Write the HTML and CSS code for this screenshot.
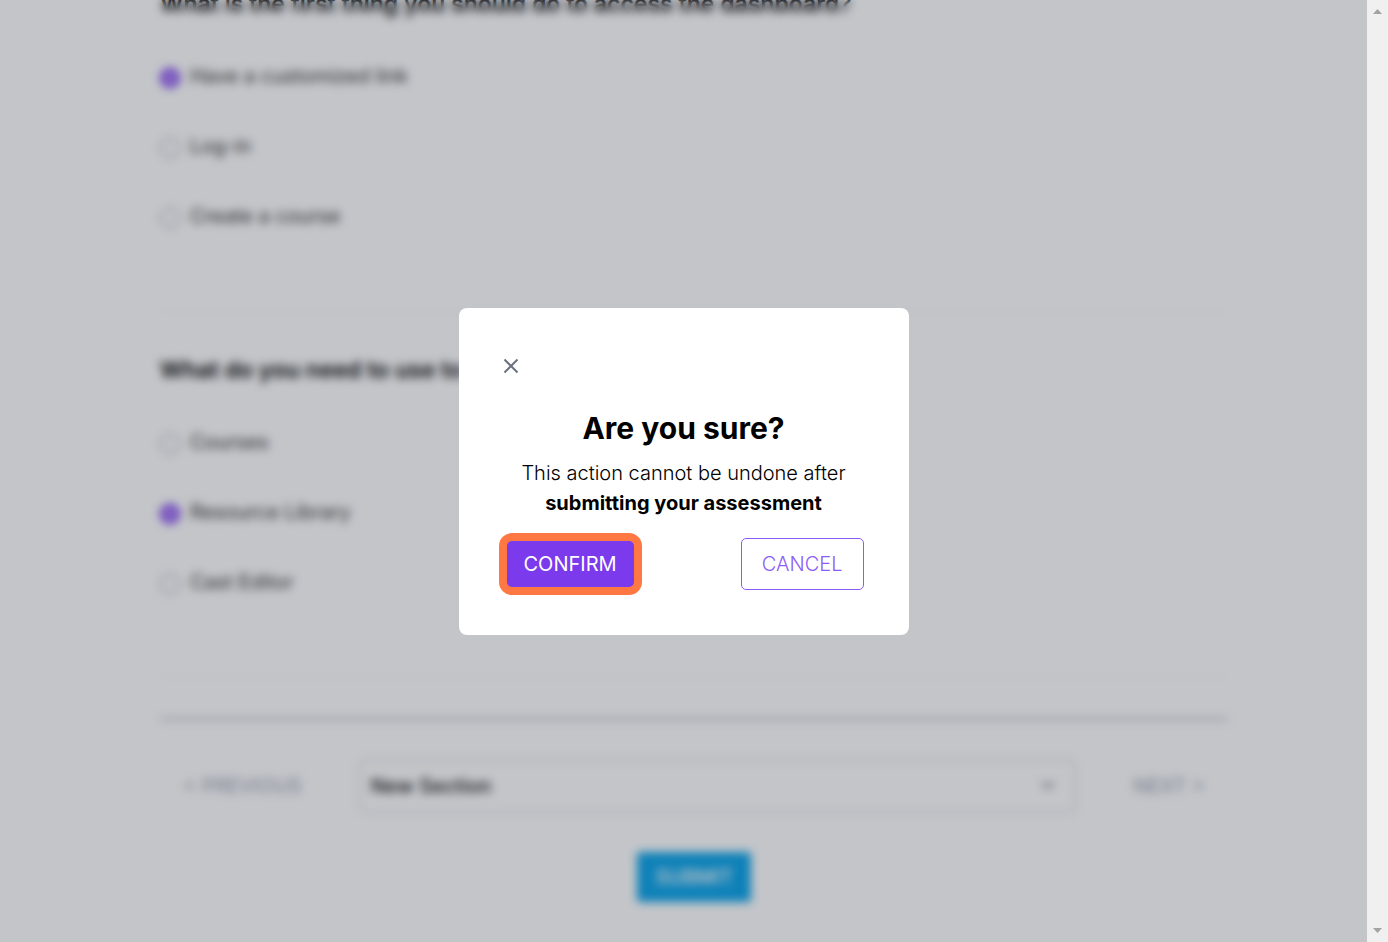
FILE: index.html
```
<!DOCTYPE html>
<html lang="en">
<head>
    <meta charset="UTF-8">
    <meta name="viewport" content="width=device-width, initial-scale=1.0">
    <title>Assessment</title>
    <link rel="stylesheet" href="styles.css">
</head>
<body>

<div class="window">
    <div class="page">
        <form class="assessment">
            <fieldset class="question">
                <legend class="question-title">What is the first thing you should do to access the dashboard?</legend>
                <label class="option"><input type="radio" name="q1" checked><span>Have a customized link</span></label>
                <label class="option"><input type="radio" name="q1"><span>Log-in</span></label>
                <label class="option"><input type="radio" name="q1"><span>Create a course</span></label>
            </fieldset>
            <fieldset class="question">
                <legend class="question-title">What do you need to use to</legend>
                <label class="option"><input type="radio" name="q2"><span>Courses</span></label>
                <label class="option"><input type="radio" name="q2" checked><span>Resource Library</span></label>
                <label class="option"><input type="radio" name="q2"><span>Cast Editor</span></label>
            </fieldset>
            <hr class="rule">
            <div class="pager">
                <button class="pager-button" type="button">&lt; PREVIOUS</button>
                <div class="select-box">
                    <select class="section-select" aria-label="Section">
                        <option>New Section</option>
                    </select>
                    <svg class="chevron" viewBox="0 0 20 20" fill="none" stroke="#6b7280" stroke-width="2"><path d="M4 7l6 6 6-6"/></svg>
                </div>
                <button class="pager-button" type="button">NEXT &gt;</button>
            </div>
            <button class="submit" type="button">SUBMIT</button>
        </form>

        <div class="overlay">
            <div class="modal" role="dialog" aria-modal="true" aria-labelledby="modal-title">
                <button class="close" type="button" aria-label="Close">
                    <svg viewBox="0 0 16 16" width="16" height="16" fill="none" stroke="#6b7280" stroke-width="2"><path d="M.5 1.500l13 13M13.500 1.500l-13 13"/></svg>
                </button>
                <h2 class="modal-title" id="modal-title">Are you sure?</h2>
                <p class="modal-text">This action cannot be undone after <strong>submitting your assessment</strong></p>
                <div class="actions">
                    <button class="confirm" type="button">CONFIRM</button>
                    <button class="cancel" type="button">CANCEL</button>
                </div>
            </div>
        </div>
    </div>

    <div class="scrollbar">
        <svg width="9" height="5" viewBox="0 0 9 5" fill="#a3a3a3"><path d="M0 5L4.500 0 9 5z"/></svg>
        <svg width="9" height="5" viewBox="0 0 9 5" fill="#a3a3a3"><path d="M0 0L4.500 5 9 0z"/></svg>
    </div>
</div>

</body>
</html>
```
FILE: styles.css
```
* {
    box-sizing: border-box;
}
body {
    margin: 0;
    font-family: Inter, "Liberation Sans", sans-serif;
    font-size: 20px;
    line-height: 30px;
    color: #000;
}
button, select {
    font: inherit;
    cursor: pointer;
}
.window {
    display: flex;
    height: 100vh;
}
.page {
    position: relative;
    flex: 1;
    display: flex;
    flex-direction: column;
    justify-content: flex-end;
    overflow: hidden;
    background: #fff;
}
.scrollbar {
    width: 21px;
    display: flex;
    flex-direction: column;
    justify-content: space-between;
    align-items: center;
    padding: 9px 0;
    background: #f0f0f0;
}

/* assessment form */
.assessment {
    display: flex;
    flex-direction: column;
    padding: 0 139px 40px 160px;
}
.question {
    display: flex;
    flex-direction: column;
    gap: 40px;
    margin: 0;
    padding: 42px 0 80px;
    border: 0;
    border-bottom: 1px solid #f3f4f6;
}
.question + .question {
    margin-top: 43px;
}
.question-title {
    padding: 0;
    font-size: 23px;
    font-weight: 600;
}
.option {
    display: flex;
    align-items: center;
    gap: 10px;
    color: #333;
}
.option input {
    appearance: none;
    width: 20px;
    height: 20px;
    margin: 4px 0 0;
    border: 1px solid #6b7280;
    border-radius: 50%;
    background: #fff;
}
.option input:checked {
    border: 0;
    background: radial-gradient(circle, #fff 3px, #7c3aed 4px);
}
.rule {
    width: 100%;
    height: 4px;
    margin: 39px 0 38px;
    border: 0;
    background: #d1d5db;
}
.pager {
    display: flex;
    align-items: center;
    gap: 34px;
}
.pager-button {
    padding: 10px 23px;
    border: 0;
    background: none;
    color: #9ca3af;
}
.select-box {
    position: relative;
    flex: 1;
    display: flex;
}
.section-select {
    appearance: none;
    width: 100%;
    padding: 10px;
    border: 2px solid #e0e0e4;
    border-radius: 5px;
    background: #fff;
    color: #111;
    font-weight: 500;
}
.chevron {
    position: absolute;
    top: 16px;
    right: 18px;
    width: 20px;
    height: 20px;
}
.submit {
    align-self: center;
    margin-top: 39px;
    padding: 10px 18px;
    border: 0;
    border-radius: 3px;
    background: #0ea5e9;
    color: #fff;
    font-weight: 500;
}

/* confirmation dialog */
.overlay {
    position: absolute;
    inset: 0;
    display: flex;
    align-items: center;
    justify-content: center;
    background: rgba(17, 24, 39, 0.25);
    backdrop-filter: blur(5px);
}
.modal {
    width: 450px;
    padding: 45px;
    border-radius: 8px;
    background: #fff;
    text-align: center;
}
.close {
    display: flex;
    padding: 5px 0;
    border: 0;
    background: none;
}
.modal-title {
    margin: 29px 0 10px;
    font-size: 30px;
    line-height: 40px;
    font-weight: 700;
}
.modal-text {
    margin: 0;
    font-weight: 300;
}
.modal-text strong {
    display: block;
    font-weight: 700;
}
.actions {
    display: flex;
    justify-content: space-between;
    margin-top: 20px;
}
.confirm, .cancel {
    padding: 10px 20px;
    border: 1px solid #8b5cf6;
    border-radius: 5px;
    background: #fff;
    color: #8b5cf6;
    font-weight: 300;
}
.confirm {
    padding: 10px 19px;
    border-color: #7c3aed;
    border-radius: 8px;
    background: #7c3aed;
    color: #fff;
    font-weight: 400;
    outline: 8px solid #ff7743;
    outline-offset: -3px;
}
```
